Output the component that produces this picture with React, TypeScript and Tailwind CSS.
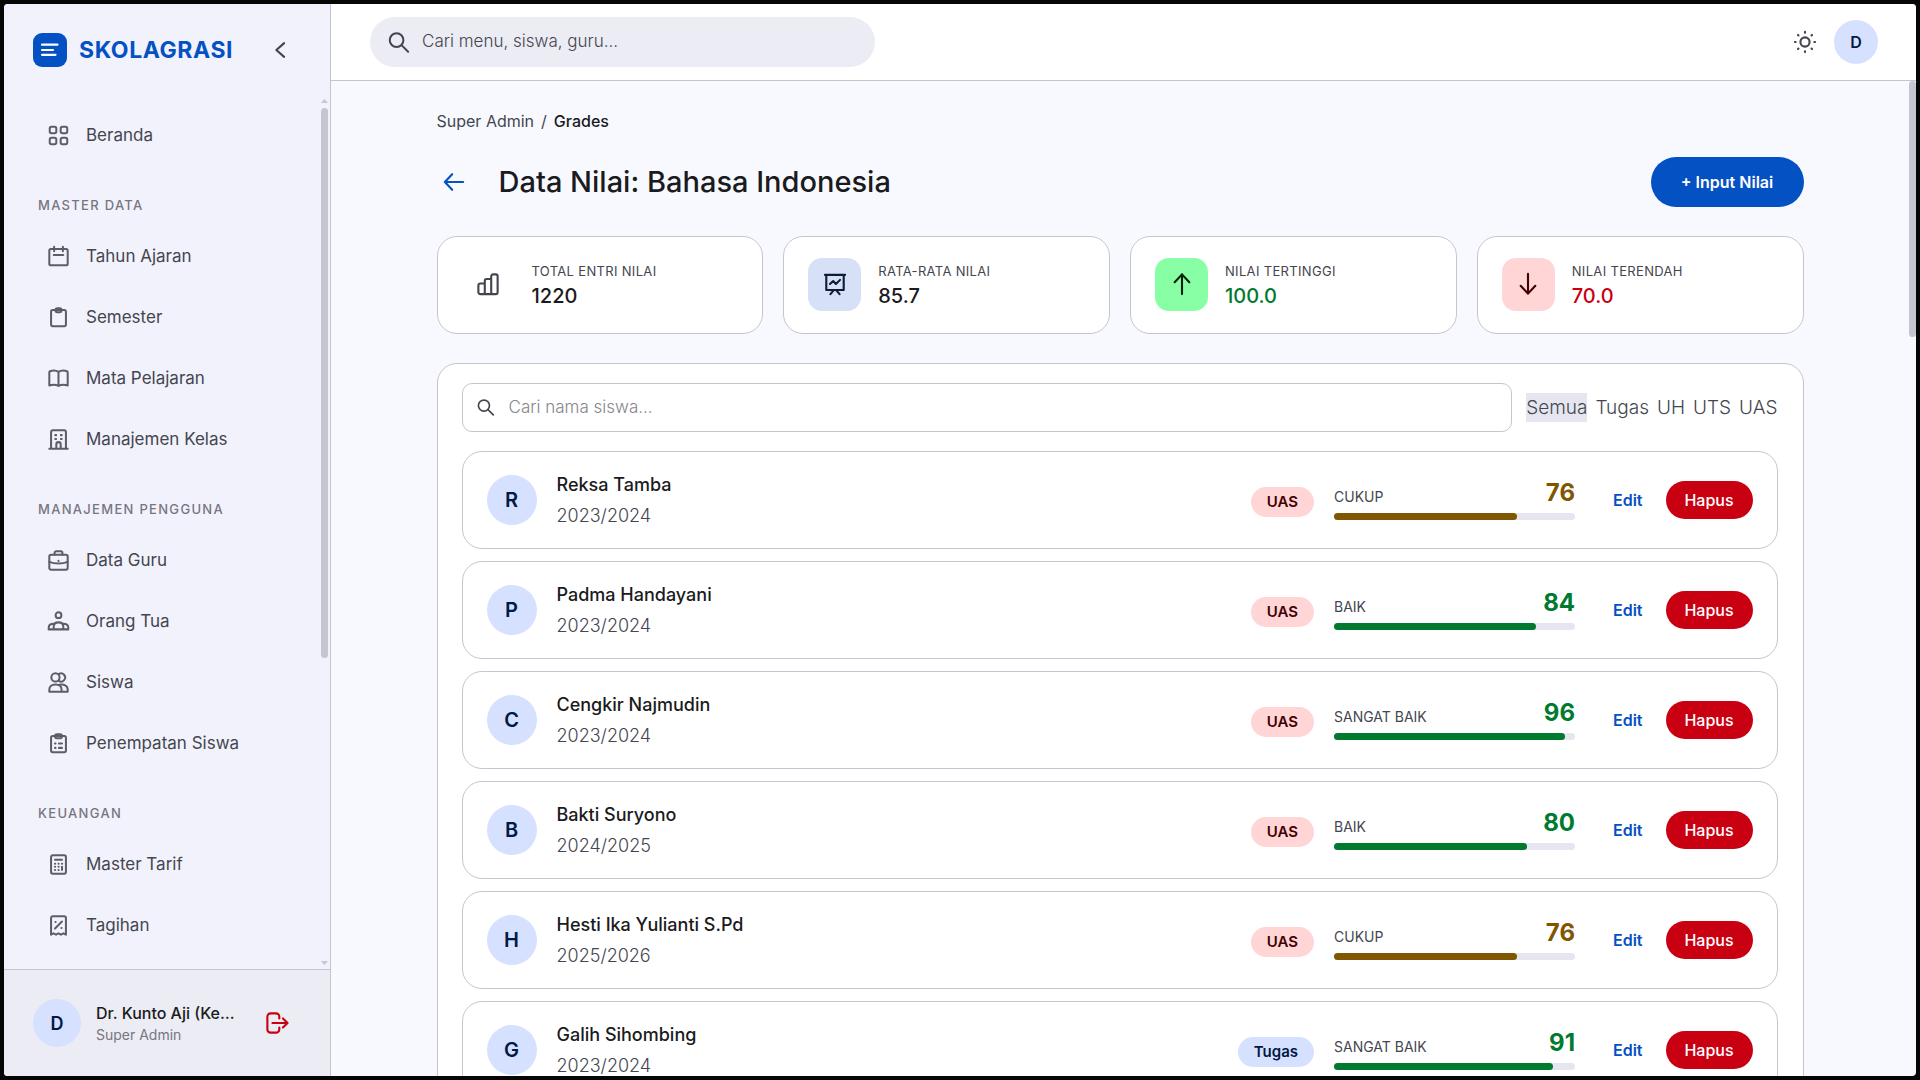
import React from 'react';

interface IconProps {
    name: string,
    className?: string
}

// 24x24 line icons
const paths: Record<string, React.ReactNode> = {
    grid: <><rect x="2" y="2" width="7.500" height="7.500" rx="2" /><rect x="14.500" y="2" width="7.500" height="7.500" rx="2" /><rect x="2" y="14.500" width="7.500" height="7.500" rx="2" /><rect x="14.500" y="14.500" width="7.500" height="7.500" rx="2" /></>,
    calendar: <><rect x="1.500" y="3.500" width="21" height="18.500" rx="1.800" /><path d="M7 1v5M17 1v5M6.500 10.300h11" /></>,
    clipboard: <><rect x="3.500" y="3.500" width="17" height="18.500" rx="2" /><rect x="8.500" y="1.500" width="7" height="4.500" rx="2.200" /></>,
    book: <path d="M12 4.500C9.500 2.800 4.800 2.800 2.300 3.700c-.5.200-.8.600-.8 1.100V20c3-1 7.500-1 10.500.4V4.500c2.500-1.700 7.200-1.700 9.700-.8.5.200.8.600.8 1.100V20c-3-1-7.500-1-10.500.4" />,
    building: <><path d="M1.500 22.500h21M3.500 22V3.500a2 2 0 0 1 2-2h13a2 2 0 0 1 2 2V22M9.500 22v-4.500a2.500 2.500 0 0 1 5 0V22" /><path d="M8.300 7h1M14.700 7h1M8.300 11.500h1M14.700 11.500h1" /></>,
    briefcase: <><rect x="1.500" y="5.500" width="21" height="17" rx="2" /><path d="M7.500 5.500V3.500a2 2 0 0 1 2-2h5a2 2 0 0 1 2 2v2M1.500 13.500c6 2.600 15 2.600 21 0M12 12.300v.2" /></>,
    parents: <><circle cx="12" cy="4.800" r="3.300" /><path d="M.8 21v-2c0-3.300 2.700-4.500 5.700-4.500M23.200 21v-2c0-3.300-2.700-4.500-5.700-4.500M6.500 21v-3c0-3.300 2.500-5 5.500-5s5.500 1.700 5.500 5v3M.8 21h22.400" /></>,
    students: <><circle cx="8.500" cy="6.200" r="4.700" /><path d="M12.300 2.300a4.700 4.700 0 1 1 0 7.900M1.500 22.500V20c0-3.800 3-5.800 7-5.800s7 2 7 5.800v2.500zM13 14.600c5-1 9.500 1 9.500 5.400v2.500h-7" /></>,
    clipboardList: <><rect x="3.500" y="3.500" width="17" height="18.500" rx="2" /><rect x="8" y="1.500" width="8" height="4.500" rx="2.200" /><path d="M8 12h.6M12.500 12h3.500M8 17h.6M12.500 17h3.500" /></>,
    calculator: <><rect x="3.500" y="1.500" width="17" height="21" rx="2" /><path d="M8 6.500h8M8 11.200h.2M12 11.200h.2M16 11.200h.2M8 14.700h.2M12 14.700h.2M8 18.200h.2M12 18.200h.2M16 14.700v3.500" /></>,
    receipt: <><path d="M3.500 22.500v-19a2 2 0 0 1 2-2h13a2 2 0 0 1 2 2v19L17.700 21l-2.900 1.500L12 21l-2.800 1.500L6.300 21z" /><path d="m16 7.500-8 8M8.500 8h.2M15.300 14.800h.2" /></>,
    search: <><circle cx="9.800" cy="9.300" r="7.800" /><path d="m15.500 15 7.500 7.500" /></>,
    chevron: <path d="m16.500 4.500-8.500 7.500 8.500 7.500" />,
    arrowLeft: <path d="M22 12H2M10 3.500 2 12l8 8.500" />,
    arrowUp: <path d="M12 23V1.500M4 10l8-8.500 8 8.500" />,
    arrowDown: <path d="M12 1v21.500M4 14l8 8.500 8-8.500" />,
    bars: <path d="M1.500 21V13.500a2 2 0 0 1 2-2H8.500V23M8.500 23V8.500a2 2 0 0 1 2-2h5V23M15.500 23V3.500a2 2 0 0 1 2-2h3a2 2 0 0 1 2 2V21a2 2 0 0 1-2 2h-17a2 2 0 0 1-2-2" />,
    presentation: <><path d="M1 2h22M2.500 2v16.500h19V2M10.500 19 7 23M13.500 19l3.500 4" /><path d="M6.500 12 10 8.800l3 3.200 4.500-4.500" /></>,
    sun: <><circle cx="12" cy="12" r="5" /><path d="M12 1v.8M12 22.200v.8M1 12h.8M22.200 12h.8M4.300 4.300l.6.600M19.100 19.100l.6.600M4.300 19.700l.6-.6M19.100 4.900l.6-.6" /></>,
    logout: <><path d="M14.500 7V5a3.500 3.500 0 0 0-3.500-3.500H5A3.500 3.500 0 0 0 1.500 5v14A3.500 3.500 0 0 0 5 22.500h6a3.500 3.500 0 0 0 3.500-3.500v-2M7 12h16.500M18.500 7l5 5-5 5" /></>,
};

const Icon: React.FC<IconProps> = ({ name, className }) => (
    <svg viewBox="0 0 24 24" fill="none" stroke="currentColor" strokeWidth="2.300" strokeLinecap="round" strokeLinejoin="round" overflow="visible" className={className} aria-hidden="true">
        {paths[name]}
    </svg>
);

const menu = [
    { title: '', items: [{ label: 'Beranda', icon: 'grid' }] },
    {
        title: 'MASTER DATA',
        items: [
            { label: 'Tahun Ajaran', icon: 'calendar' },
            { label: 'Semester', icon: 'clipboard' },
            { label: 'Mata Pelajaran', icon: 'book' },
            { label: 'Manajemen Kelas', icon: 'building' },
        ],
    },
    {
        title: 'MANAJEMEN PENGGUNA',
        items: [
            { label: 'Data Guru', icon: 'briefcase' },
            { label: 'Orang Tua', icon: 'parents' },
            { label: 'Siswa', icon: 'students' },
            { label: 'Penempatan Siswa', icon: 'clipboardList' },
        ],
    },
    {
        title: 'KEUANGAN',
        items: [
            { label: 'Master Tarif', icon: 'calculator' },
            { label: 'Tagihan', icon: 'receipt' },
        ],
    },
];

const stats = [
    { label: 'TOTAL ENTRI NILAI', value: '1220', icon: 'bars', box: 'text-[#44464f]', color: 'text-[#1a1b20]' },
    { label: 'RATA-RATA NILAI', value: '85.7', icon: 'presentation', box: 'bg-[#d6e0f7] text-[#101b37]', color: 'text-[#1a1b20]' },
    { label: 'NILAI TERTINGGI', value: '100.0', icon: 'arrowUp', box: 'bg-[#89ffa5] text-[#00210b]', color: 'text-[#007a2f]' },
    { label: 'NILAI TERENDAH', value: '70.0', icon: 'arrowDown', box: 'bg-[#ffd5d5] text-[#410004]', color: 'text-[#c90012]' },
];

const filters = ['Semua', 'Tugas', 'UH', 'UTS', 'UAS'];

const grades = [
    { name: 'Reksa Tamba', year: '2023/2024', type: 'UAS', level: 'CUKUP', score: 76 },
    { name: 'Padma Handayani', year: '2023/2024', type: 'UAS', level: 'BAIK', score: 84 },
    { name: 'Cengkir Najmudin', year: '2023/2024', type: 'UAS', level: 'SANGAT BAIK', score: 96 },
    { name: 'Bakti Suryono', year: '2024/2025', type: 'UAS', level: 'BAIK', score: 80 },
    { name: 'Hesti Ika Yulianti S.Pd', year: '2025/2026', type: 'UAS', level: 'CUKUP', score: 76 },
    { name: 'Galih Sihombing', year: '2023/2024', type: 'Tugas', level: 'SANGAT BAIK', score: 91 },
];

const Sidebar: React.FC = () => (
    <aside className="flex w-[327px] shrink-0 flex-col border-r border-[#c5c5d0] bg-[#f2f2fc]">
        {/* Brand */}
        <div className="flex h-[92px] shrink-0 items-center pl-[29px] pr-[38px]">
            <svg viewBox="0 0 34 34" className="size-[34px]" aria-hidden="true">
                <rect width="34" height="34" rx="9" fill="#0451c3" />
                <path d="M9 11.700h15.500M9 17h11M9 21.800h13.500" stroke="#fff" strokeWidth="2.200" strokeLinecap="round" />
            </svg>
            <span className="ml-3 text-[23px] font-bold leading-8 tracking-wide text-[#0451c3]">SKOLAGRASI</span>
            <button className="ml-auto flex size-6 items-center justify-center text-[#44464f]" aria-label="Tutup menu">
                <Icon name="chevron" className="size-[22px]" />
            </button>
        </div>

        {/* Menu */}
        <div className="flex min-h-0 flex-1">
            <nav className="min-w-0 flex-1 overflow-hidden px-4 pt-[9px]">
                {menu.map((group) => (
                    <div key={group.title} className="mb-[18px]">
                        {group.title && <h2 className="flex h-[42px] items-center px-[18px] pt-0.5 text-[13px] font-medium tracking-widest text-[#767680]">{group.title}</h2>}
                        {group.items.map((item) => (
                            <a key={item.label} href="#" className="flex h-[61px] items-center gap-[17px] px-7 text-[17px] text-[#44464f]">
                                <Icon name={item.icon} className="size-[21px] shrink-0 text-[#5b5d67]" />
                                {item.label}
                            </a>
                        ))}
                    </div>
                ))}
            </nav>
            <div className="flex w-[9px] shrink-0 flex-col pr-[2px] text-[#c5c5d0]">
                <svg viewBox="0 0 7 4" className="mb-[5px] mt-[3px] h-1 w-[7px]" fill="currentColor"><path d="M0 4 3.500 0 7 4z" /></svg>
                <div className="h-[63%] rounded-full bg-[#c5c5d0]"></div>
                <svg viewBox="0 0 7 4" className="mb-1 mt-auto h-1 w-[7px]" fill="currentColor"><path d="M0 0h7L3.500 4z" /></svg>
            </div>
        </div>

        {/* Profile */}
        <div className="flex h-[107px] shrink-0 items-center border-t border-[#c5c5d0] bg-[#ececf4] pl-[29px] pr-[42px]">
            <div className="flex size-12 shrink-0 items-center justify-center rounded-full bg-[#d6e0ff] text-[18px] font-semibold text-[#001945]">D</div>
            <div className="ml-[15px] min-w-0 flex-1">
                <p className="whitespace-nowrap text-[16px] font-medium leading-6 text-[#1a1b20]">Dr. Kunto Aji (Ke…</p>
                <p className="text-[14px] leading-5 text-[#767680]">Super Admin</p>
            </div>
            <button className="text-[#c90012]" aria-label="Keluar"><Icon name="logout" className="size-[22px]" /></button>
        </div>
    </aside>
);

const Header: React.FC = () => (
    <header className="flex h-[77px] shrink-0 items-center justify-between border-b border-[#c5c5d0] bg-white pl-[39px] pr-[38px]">
        <label className="flex h-[50px] w-[505px] items-center gap-[13px] rounded-full bg-[#ececf4] px-[18px] text-[#44464f]">
            <Icon name="search" className="size-[21px] shrink-0" />
            <input type="text" aria-label="Cari menu" placeholder="Cari menu, siswa, guru..." className="w-full bg-transparent text-[17px] font-light outline-none placeholder:text-[#44464f]" />
        </label>
        <div className="flex items-center gap-[18px]">
            <button className="text-[#44464f]" aria-label="Ganti tema"><Icon name="sun" className="size-[22px]" /></button>
            <button className="flex size-11 items-center justify-center rounded-full bg-[#d6e0ff] text-[16px] font-semibold text-[#001945]">D</button>
        </div>
    </header>
);

interface GradeRowProps {
    name: string,
    year: string,
    type: string,
    level: string,
    score: number
}

const GradeRow: React.FC<GradeRowProps> = (props) => {
    const good = props.score >= 80;

    return (
        <li className="flex h-[98px] items-center rounded-[20px] border border-[#c5c5d0] px-6">
            <div className="flex size-[50px] shrink-0 items-center justify-center rounded-full bg-[#d6e0ff] text-[20px] font-semibold text-[#001945]">{props.name[0]}</div>
            <div className="ml-5 min-w-0 flex-1">
                <h3 className="text-[18px] font-medium leading-8 text-[#1a1b20]">{props.name}</h3>
                <p className="text-[18px] font-light leading-[30px] text-[#44464f]">{props.year}</p>
            </div>
            <span className={`mt-1 flex h-[30px] items-center rounded-full px-4 text-[15px] font-semibold ${props.type === 'UAS' ? 'bg-[#ffd5d5] text-[#410004]' : 'bg-[#d6e0ff] text-[#001945]'}`}>{props.type}</span>

            {/* Score */}
            <div className="mb-1 ml-5 w-[241px]">
                <div className="flex h-8 items-end justify-between">
                    <span className="text-[14px] leading-6 text-[#44464f]">{props.level}</span>
                    <span className={`text-[24px] font-bold leading-8 ${good ? 'text-[#007a2f]' : 'text-[#805600]'}`}>{props.score}</span>
                </div>
                <div className="mt-1 h-[7px] rounded-full bg-[#e6e6f0]">
                    <div className={`h-full rounded-full ${good ? 'bg-[#007a2f]' : 'bg-[#805600]'}`} style={{ width: `${props.score}%` }}></div>
                </div>
            </div>

            <button className="ml-[38px] text-[16px] font-semibold text-[#0451c3]">Edit</button>
            <button className="ml-[23px] h-[38px] w-[87px] rounded-full bg-[#c90012] text-[16px] font-medium text-white">Hapus</button>
        </li>
    )
}

const App: React.FC = () => {
    return (
        <div className="h-screen bg-[#060606] p-1 font-['Inter','Liberation_Sans',sans-serif]">
            <div className="flex h-full overflow-hidden rounded-[4px] bg-[#f8f9ff]">
                <Sidebar />
                <div className="flex min-w-0 flex-1 flex-col">
                    <Header />
                    <div className="flex min-h-0 flex-1">
                        <main className="min-w-0 flex-1 overflow-hidden">
                            <div className="mx-auto max-w-[1367px] pt-7">
                                {/* Breadcrumb */}
                                <nav className="flex h-6 items-center gap-[7px] text-[16px] text-[#44464f]">
                                    <a href="#">Super Admin</a>
                                    <span>/</span>
                                    <span className="font-medium text-[#1a1b20]">Grades</span>
                                </nav>

                                {/* Title */}
                                <div className="mt-6 flex items-center">
                                    <button className="ml-1.5 text-[#0451c3]" aria-label="Kembali"><Icon name="arrowLeft" className="size-[22px]" /></button>
                                    <h1 className="ml-[34px] text-[29px] font-medium text-[#1a1b20]">Data Nilai: Bahasa Indonesia</h1>
                                    <button className="ml-auto h-[50px] w-[153px] rounded-full bg-[#0451c3] text-[16px] font-semibold text-white">+ Input Nilai</button>
                                </div>

                                {/* Stats */}
                                <div className="mt-[29px] grid grid-cols-4 gap-5">
                                    {stats.map((stat) => (
                                        <div key={stat.label} className="flex h-[98px] items-center gap-[17px] rounded-[20px] border border-[#c5c5d0] bg-white px-6 pb-0.5">
                                            <div className={`flex size-[53px] shrink-0 items-center justify-center rounded-[14px] ${stat.box}`}>
                                                <Icon name={stat.icon} className="size-[22px]" />
                                            </div>
                                            <div>
                                                <p className="text-[13px] leading-6 tracking-wide text-[#44464f]">{stat.label}</p>
                                                <p className={`text-[20px] font-medium leading-[26px] ${stat.color}`}>{stat.value}</p>
                                            </div>
                                        </div>
                                    ))}
                                </div>

                                {/* Grade list */}
                                <section className="mt-[29px] rounded-t-[20px] border border-[#c5c5d0] bg-white pl-6 pr-[25px] pt-[19px]">
                                    <div className="flex items-center gap-[14px]">
                                        <label className="flex h-[49px] flex-1 items-center gap-[15px] rounded-[10px] border border-[#c5c5d0] px-[14px] text-[#44464f]">
                                            <Icon name="search" className="size-[17px] shrink-0" />
                                            <input type="text" aria-label="Cari nama siswa" placeholder="Cari nama siswa..." className="w-full bg-transparent text-[17px] font-light outline-none placeholder:text-[#85868c]" />
                                        </label>
                                        <div className="flex gap-2 text-[19px] font-light leading-[29px] text-[#44464f]">
                                            {filters.map((filter, index) => (
                                                <button key={filter} className={index === 0 ? 'bg-[#e6e6f0]' : ''}>{filter}</button>
                                            ))}
                                        </div>
                                    </div>
                                    <ul className="mt-[19px] flex flex-col gap-3">
                                        {grades.map((grade) => <GradeRow key={grade.name} {...grade} />)}
                                    </ul>
                                </section>
                            </div>
                        </main>
                        {/* Scroll track */}
                        <div className="w-[7px] shrink-0">
                            <div className="h-64 rounded-full bg-[#c5c5d0]"></div>
                        </div>
                    </div>
                </div>
            </div>
        </div>
    )
}

export default App;
